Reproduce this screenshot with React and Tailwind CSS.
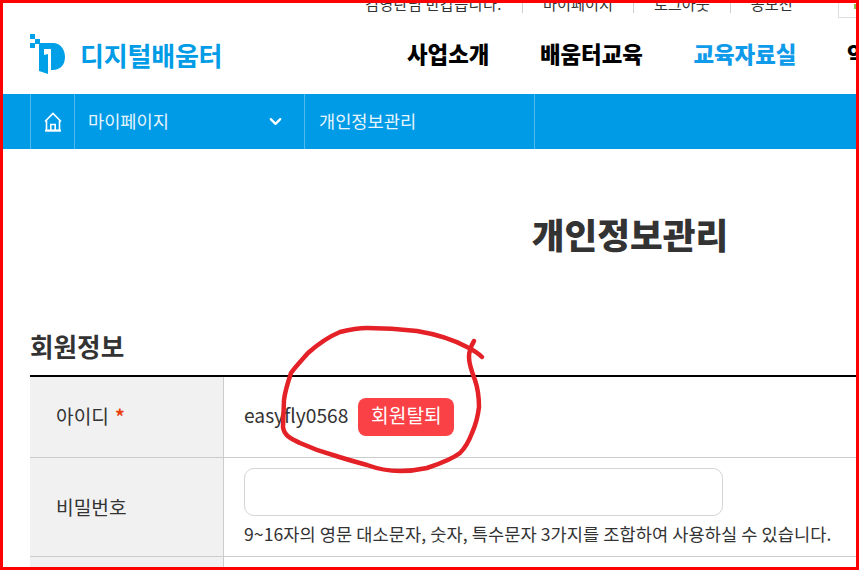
import { ChevronDown } from 'lucide-react';

const utilLinks = ['김영란님 반갑습니다.', '마이페이지', '로그아웃', '공모전'];
const gnb = ['사업소개', '배움터교육', '교육자료실', '약관안내'];

function Logo() {
  return (
    <svg width="36" height="42" viewBox="0 0 36 42" className="shrink-0">
      <rect x="0" y="0" width="5" height="5" fill="#00a0e9" />
      <rect x="5" y="5" width="5" height="5" fill="#00a0e9" />
      <rect x="0" y="9" width="5" height="5" fill="#00a0e9" />
      <path
        fillRule="evenodd"
        d="M9 9H23C30 9 35 15 35 23C35 31 30 36 23 36H18V40L9 37V15Z M14 15L21 15V36H18V20L14 21Z"
        fill="#00a0e9"
      />
    </svg>
  );
}

function HomeIcon() {
  return (
    <svg width="18" height="20" viewBox="0 0 18 20" fill="none" stroke="#fff" strokeWidth="1.6">
      <path d="M1 9.5L9 1.5L17 9.5" />
      <path d="M2.5 8.5V18.5H15.5V8.5" />
      <path d="M6.8 18.5V12.5H11.2V18.5" />
      <path d="M1 18.6H17" strokeWidth="2" />
    </svg>
  );
}

export default function App() {
  return (
    <div className="relative h-[570px] w-[859px] overflow-hidden border-[3px] border-[#ff0000] bg-white font-['Noto_Sans_CJK_KR','Noto_Sans',sans-serif] text-[#333]">
      <div className="w-[1300px]">
        {/* Top util bar, cut off by the capture */}
        <div className="relative h-[21px] overflow-hidden">
          <ul className="absolute -top-[10px] left-[362px] flex items-center text-[15.2px] leading-[20px] text-[#333]">
            {utilLinks.map((t, i) => (
              <li key={t} className="flex items-center">
                <span className={`whitespace-nowrap ${i === 0 ? 'w-[137px] tracking-[0.3px]' : ''}`}>{t}</span>
                {i < utilLinks.length - 1 && <span className="mx-[20px] h-[20px] w-px bg-[#ccc]" />}
              </li>
            ))}
          </ul>
          <div className="absolute -top-[10px] left-[835px] h-[25px] w-[40px] border border-[#ddd]">
            <span className="absolute left-[15px] top-[10px] h-[5px] w-[3px] bg-[#8bc34a]" />
          </div>
        </div>

        {/* Logo + main nav */}
        <div className="flex h-[70px] items-center pb-[8px] pl-[27px]">
          <Logo />
          <span className="ml-[14px] w-[142px] whitespace-nowrap text-[26px] font-bold leading-none tracking-[-0.2px] text-[#009ce6]">
            디지털배움터
          </span>
          <nav className="-mt-[3px] ml-[185px] flex gap-[50.5px] text-[22.4px] font-black">
            {gnb.map((t) => (
              <a key={t} className={`whitespace-nowrap ${t === '교육자료실' ? 'text-[#0f9bea]' : 'text-black'}`}>
                {t}
              </a>
            ))}
          </nav>
        </div>

        {/* Location bar */}
        <div className="flex h-[55px] bg-[#009be6] pl-[27px] text-[17.6px] text-[#e6f5fd]">
          <div className="flex w-[45px] items-center justify-center border-x border-[#4db9ee]">
            <HomeIcon />
          </div>
          <div className="flex w-[230px] items-center justify-between border-r border-[#4db9ee] pl-[13px] pr-[19px]">
            <span>마이페이지</span>
            <ChevronDown size={19} strokeWidth={2.75} className="text-white" />
          </div>
          <div className="flex w-[230px] items-center border-r border-[#4db9ee] pl-[14px]">
            <span>개인정보관리</span>
          </div>
        </div>

        {/* Content */}
        <div className="ml-[27px] w-[1200px]">
          <h1 className="mt-[61px] text-center text-[35.6px] font-black leading-[48px] text-[#333]">개인정보관리</h1>

          <h2 className="mt-[70px] text-[25.6px] font-bold leading-[36px] text-[#333]">회원정보</h2>

          <div className="mt-[11px] border-t-2 border-black text-[19.2px]">
            <div className="flex h-[81px] border-b border-[#ccc]">
              <div className="flex w-[194px] items-center border-r border-[#ccc] bg-[#f1f1f1] pb-[2px] pl-[26px]">
                아이디 <span className="ml-[6px] font-bold text-[#e8400c]">*</span>
              </div>
              <div className="flex items-center pl-[20px]">
                <span className="-mt-[3px]">easyfly0568</span>
                <button className="ml-[10px] h-[38px] w-[96px] rounded-lg bg-[#fa4145] pb-[3px] text-white">
                  회원탈퇴
                </button>
              </div>
            </div>
            <div className="flex h-[99px] border-b border-[#ccc]">
              <div className="flex w-[194px] items-center border-r border-[#ccc] bg-[#f1f1f1] pl-[26px]">
                비밀번호
              </div>
              <div className="pl-[20px] pt-[10px]">
                <input type="password" className="block h-[48px] w-[479px] rounded-[10px] border border-[#d5d5d5] bg-white" />
                <p className="mt-[5px] whitespace-nowrap text-[17.6px] leading-[26px] tracking-[0.06px]">
                  9~16자의 영문 대소문자, 숫자, 특수문자 3가지를 조합하여 사용하실 수 있습니다.
                </p>
              </div>
            </div>
            <div className="flex h-[60px]">
              <div className="w-[194px] border-r border-[#ccc] bg-[#f1f1f1]" />
            </div>
          </div>
        </div>
      </div>

      {/* Hand-drawn red circle over the capture */}
      <svg className="pointer-events-none absolute -left-[3px] -top-[3px]" width="859" height="570" fill="none">
        <path
          d="M482 357C477 352 473 350 467 347C452 339 435 334 417 331C400 329 383 328 367 328C357 328 348 330 340 332C328 337 317 345 308 353C302 360 296 366 291 373C288 382 285 391 284 400L283 427C284 436 292 439 300 443C311 448 322 452 333 455C345 459 356 462 367 465C378 469 389 471 400 471C409 471 418 470 427 468C439 464 451 460 460 453C466 447 469 441 472 433C476 424 478 416 479 407C479 398 478 389 475 380C472 372 469 365 469 357C469 351 471 346 474 341"
          stroke="#e42127"
          strokeWidth="4.5"
          strokeLinecap="round"
          strokeLinejoin="round"
        />
      </svg>
    </div>
  );
}
